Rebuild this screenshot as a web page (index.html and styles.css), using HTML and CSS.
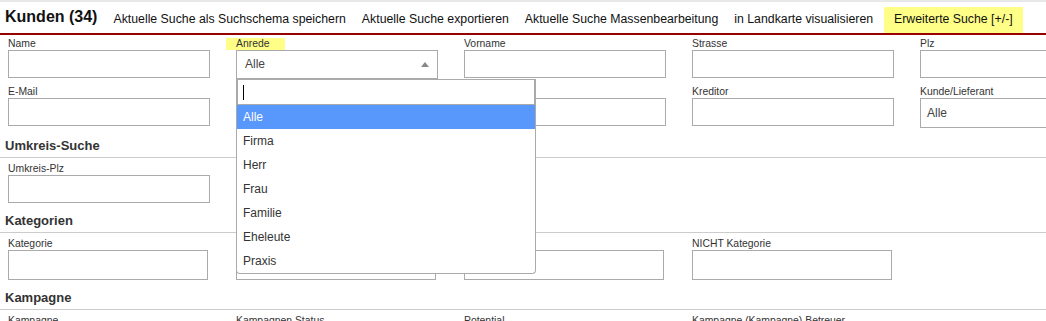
FILE: index.html
```html
<!DOCTYPE html>
<html lang="de">
  <head>
    <meta charset="utf-8">
    <title>Kunden</title>
    <link rel="stylesheet" href="styles.css">
  </head>
  <body>
    <div class="topbar">
      <h1>Kunden (34)</h1>
      <a href="#">Aktuelle Suche als Suchschema speichern</a>
      <a href="#">Aktuelle Suche exportieren</a>
      <a href="#">Aktuelle Suche Massenbearbeitung</a>
      <a href="#">in Landkarte visualisieren</a>
      <a href="#" class="toggle">Erweiterte Suche [+/-]</a>
    </div>

    <form class="search">
      <div class="fields">
        <div class="field"><label>Name</label><input type="text"></div>
        <div class="field anrede">
          <label class="marked">Anrede</label>
          <div class="select open">Alle<span class="arrow"></span></div>
          <div class="dropdown">
            <div class="dd-search"><span class="caret"></span></div>
            <ul class="dd-results">
              <li class="highlighted">Alle</li>
              <li>Firma</li>
              <li>Herr</li>
              <li>Frau</li>
              <li>Familie</li>
              <li>Eheleute</li>
              <li>Praxis</li>
            </ul>
          </div>
        </div>
        <div class="field"><label>Vorname</label><input type="text"></div>
        <div class="field"><label>Strasse</label><input type="text"></div>
        <div class="field"><label>Plz</label><input type="text"></div>

        <div class="field"><label>E-Mail</label><input type="text"></div>
        <div class="field"><label>Firma</label><input type="text"></div>
        <div class="field"><label>Ort</label><input type="text"></div>
        <div class="field"><label>Kreditor</label><input type="text"></div>
        <div class="field">
          <label>Kunde/Lieferant</label>
          <div class="select wide">Alle<span class="arrow down"></span></div>
        </div>
      </div>

      <h3>Umkreis-Suche</h3>
      <div class="fields">
        <div class="field"><label>Umkreis-Plz</label><input type="text"></div>
        <div class="field"><label>Km</label><input type="text"></div>
      </div>

      <h3>Kategorien</h3>
      <div class="fields">
        <div class="field"><label>Kategorie</label><input type="text" class="multi"></div>
        <div class="field"><label>UND</label><input type="text" class="multi"></div>
        <div class="field"><label>ODER</label><input type="text" class="multi"></div>
        <div class="field"><label>NICHT Kategorie</label><input type="text" class="multi"></div>
      </div>

      <h3>Kampagne</h3>
      <div class="fields">
        <div class="field"><label>Kampagne</label><input type="text"></div>
        <div class="field"><label>Kampagnen Status</label><input type="text"></div>
        <div class="field"><label>Potential</label><input type="text"></div>
        <div class="field"><label>Kampagne (Kampagne) Betreuer</label><input type="text"></div>
      </div>
    </form>
  </body>
</html>
```

FILE: styles.css
```css
html,
body {
  overflow: hidden;
}

body {
  margin: 0;
  background: #fff;
  color: #333;
  font-family: "Liberation Sans", Arial, sans-serif;
}

.topbar {
  display: flex;
  align-items: flex-end;
  height: 31px;
  padding-left: 5px;
  border-top: 2px solid #e8e8e8;
  border-bottom: 2px solid #990000;

  h1 {
    margin: 0;
    padding-bottom: 4px;
    font-size: 16px;
    line-height: 24px;
    color: #111;
  }

  a {
    margin-left: 16px;
    padding-bottom: 2px;
    font-size: 12.3px;
    line-height: 24px;
    color: #111;
    text-decoration: none;
    white-space: nowrap;

    &.toggle {
      margin-left: 11px;
      padding: 0 10px 2px;
      background: #ffff88;
    }
  }
}

.fields {
  display: grid;
  grid-template-columns: repeat(5, 202px);
  column-gap: 26px;
  row-gap: 7px;
  align-items: start;
  padding: 5px 0 0 8px;

  &:first-child {
    padding-top: 3px;
  }
}

.field {
  position: relative;

  label {
    display: block;
    font-size: 10.4px;
    line-height: 12px;
    color: #333;
    white-space: nowrap;

    &.marked {
      width: max-content;
      margin-left: -10px;
      padding: 0 15px 0 10px;
      background: #ffff88;
    }
  }

  input {
    display: block;
    box-sizing: border-box;
    width: 202px;
    height: 28px;
    margin: 0;
    padding: 0 6px;
    border: 1px solid #aaa;
    border-radius: 0;
    background: #fff;

    &.multi {
      width: 200px;
      height: 30px;
    }
  }
}

.select {
  position: relative;
  box-sizing: border-box;
  height: 29px;
  padding-left: 8px;
  border: 1px solid #aaa;
  font-size: 12px;
  line-height: 27px;
  color: #444;

  &.wide {
    height: 30px;
    padding-left: 6px;
    line-height: 28px;
  }

  .arrow {
    position: absolute;
    right: 8px;
    top: 11px;
    border-left: 4px solid transparent;
    border-right: 4px solid transparent;
    border-bottom: 5px solid #888;

    &.down {
      border-bottom: none;
      border-top: 5px solid #888;
    }
  }
}

.dropdown {
  position: absolute;
  z-index: 10;
  left: 0;
  top: 41px;
  box-sizing: border-box;
  width: 300px;
  border: 1px solid #aaa;
  border-top: none;
  border-radius: 0 0 4px 4px;
  background: #fff;
}

.dd-search {
  height: 26px;
  box-sizing: border-box;
  border: 1px solid #aaa;
  padding: 5px 0 0 5px;

  .caret {
    display: block;
    width: 1px;
    height: 15px;
    background: #000;
  }
}

.dd-results {
  margin: 0;
  padding: 0;
  list-style: none;

  li {
    height: 24px;
    padding: 0 6px;
    font-size: 12px;
    line-height: 24px;
    color: #333;

    &.highlighted {
      background: #5897fb;
      color: #fff;
    }
  }
}

h3 {
  margin: 11px 0 0;
  padding: 0 0 4px 5px;
  border-bottom: 1px solid #ccc;
  font-size: 13px;
  line-height: 14px;
  color: #333;
}
```
